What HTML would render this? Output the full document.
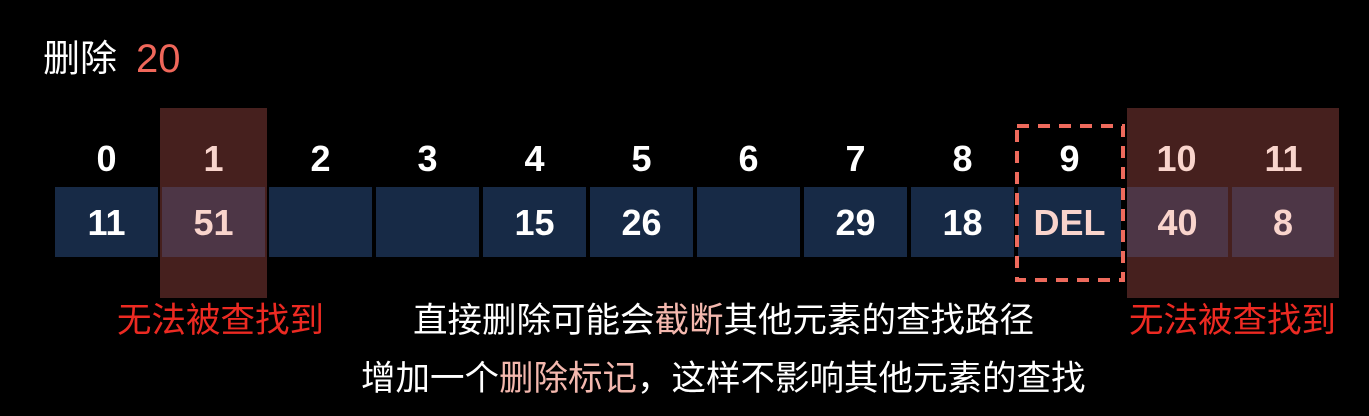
<!DOCTYPE html>
<html><head><meta charset="utf-8"><style>
body{margin:0;width:1369px;height:416px;background:#000;position:relative;overflow:hidden;font-family:"Liberation Sans","Noto Sans CJK SC",sans-serif;color:#fff}
.a{position:absolute}
.cell{position:absolute;top:187px;width:103px;height:70px;background:#172a46;text-align:center;line-height:72px;font-size:36px;font-weight:bold}
.idx{position:absolute;top:137px;width:103px;text-align:center;font-size:36px;font-weight:bold;line-height:44px}
.hl{background:#46201e}
.p{color:#f9d4cc}
.cell.o{background:#4d3646}
.t{font-size:34.5px;line-height:40px;white-space:nowrap}
.r{color:#ec2a22}
.k{color:#f4b8ae}
</style></head><body>
<div class="a" style="left:43px;top:38px;font-size:37px;line-height:42px;white-space:nowrap">删除</div>
<div class="a" style="left:136px;top:37px;font-size:40px;line-height:44px;color:#f0675a">20</div>
<div class="a hl" style="left:160px;top:108px;width:107px;height:190px"></div>
<div class="a hl" style="left:1127px;top:108px;width:212px;height:190px"></div>
<div class="idx" style="left:55px">0</div>
<div class="idx p" style="left:162px">1</div>
<div class="idx" style="left:269px">2</div>
<div class="idx" style="left:376px">3</div>
<div class="idx" style="left:483px">4</div>
<div class="idx" style="left:590px">5</div>
<div class="idx" style="left:697px">6</div>
<div class="idx" style="left:804px">7</div>
<div class="idx" style="left:911px">8</div>
<div class="idx" style="left:1018px">9</div>
<div class="idx p" style="left:1125px">10</div>
<div class="idx p" style="left:1232px">11</div>
<div class="cell" style="left:55px">11</div>
<div class="cell o p" style="left:162px">51</div>
<div class="cell" style="left:269px"></div>
<div class="cell" style="left:376px"></div>
<div class="cell" style="left:483px">15</div>
<div class="cell" style="left:590px">26</div>
<div class="cell" style="left:697px"></div>
<div class="cell" style="left:804px">29</div>
<div class="cell" style="left:911px">18</div>
<div class="cell p" style="left:1018px">DEL</div>
<div class="cell o p" style="left:1127px;width:101px">40</div>
<div class="cell o p" style="left:1232px;width:102px">8</div>
<svg class="a" style="left:1014px;top:123px" width="112" height="160"><rect x="3" y="3" width="106" height="154" fill="none" stroke="#ee6a5c" stroke-width="4" stroke-dasharray="12 9"/></svg>
<div class="a t r" style="left:117px;top:301px">无法被查找到</div>
<div class="a t r" style="left:1129px;top:301px">无法被查找到</div>
<div class="a t" style="left:413px;top:301px">直接删除可能会<span class="k">截断</span>其他元素的查找路径</div>
<div class="a t" style="left:361px;top:359px">增加一个<span class="k">删除标记</span>，这样不影响其他元素的查找</div>
</body></html>
